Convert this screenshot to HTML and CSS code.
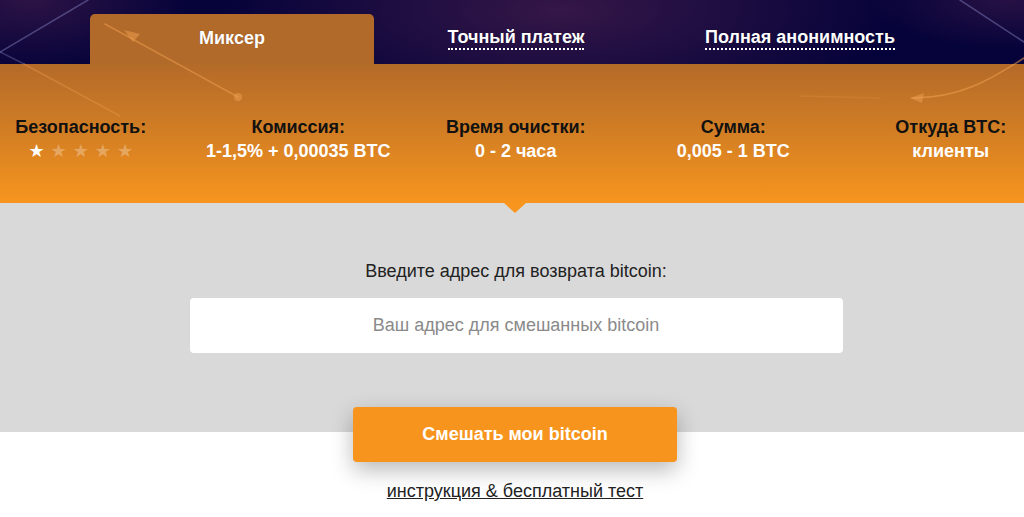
FILE: index.html
```html
<!DOCTYPE html>
<html lang="ru">
<head>
<meta charset="utf-8">
<title>Миксер</title>
<link rel="stylesheet" href="styles.css">
</head>
<body>
<div class="page">
  <header class="hero">
    <svg class="deco" viewBox="0 0 1024 203" preserveAspectRatio="none" aria-hidden="true">
      <g fill="none" stroke-linecap="round">
        <path d="M88 0 L0 52" stroke="#8a8ac8" stroke-opacity="0.45" stroke-width="1.5"/>
        <path d="M0 52 L24 64" stroke="#8a8ac8" stroke-opacity="0.35" stroke-width="1.5"/>
        <path d="M24 64 L120 116" stroke="#f0a050" stroke-opacity="0.35" stroke-width="1.5"/>
        <path d="M105 24 L238 97" stroke="#f0a050" stroke-opacity="0.5" stroke-width="1.5"/>
        <path d="M960 0 L1024 42" stroke="#8a8ac8" stroke-opacity="0.45" stroke-width="1.5"/>
        <path d="M1024 58 C990 80 960 98 912 98" stroke="#f0a050" stroke-opacity="0.55" stroke-width="1.5"/>
        <path d="M800 96 L880 98" stroke="#f0a050" stroke-opacity="0.2" stroke-width="1.5"/>
      </g>
      <g fill="#f0a050" fill-opacity="0.5">
        <path d="M124 30 L140 34 L133 42 Z"/>
        <circle cx="238" cy="97" r="4"/>
        <path d="M910 98 L924 93 L922 103 Z"/>
      </g>
    </svg>
    <nav class="tabs">
      <div class="tab tab-active">Миксер</div>
      <div class="tab"><span class="tab-link">Точный платеж</span></div>
      <div class="tab"><span class="tab-link">Полная анонимность</span></div>
    </nav>
    <section class="panel">
      <div class="stats">
        <div class="stat">
          <div class="stat-label">Безопасность:</div>
          <div class="stars"><span class="star on">★</span><span class="star">★</span><span class="star">★</span><span class="star">★</span><span class="star">★</span></div>
        </div>
        <div class="stat">
          <div class="stat-label">Комиссия:</div>
          <div class="stat-value">1-1,5% + 0,00035 BTC</div>
        </div>
        <div class="stat">
          <div class="stat-label">Время очистки:</div>
          <div class="stat-value">0 - 2 часа</div>
        </div>
        <div class="stat">
          <div class="stat-label">Сумма:</div>
          <div class="stat-value">0,005 - 1 BTC</div>
        </div>
        <div class="stat">
          <div class="stat-label">Откуда BTC:</div>
          <div class="stat-value">клиенты</div>
        </div>
      </div>
    </section>
  </header>
  <section class="form">
    <div class="form-label">Введите адрес для возврата bitcoin:</div>
    <div class="input">Ваш адрес для смешанных bitcoin</div>
  </section>
  <section class="actions">
    <button class="mix-btn">Смешать мои bitcoin</button>
    <a class="help-link" href="#">инструкция &amp; бесплатный тест</a>
  </section>
</div>
</body>
</html>
```
FILE: styles.css
```css
* { box-sizing: border-box; }
html, body { margin: 0; padding: 0; }
body {
  font-family: "Liberation Sans", Arial, sans-serif;
  background: #fff;
  color: #222;
  overflow: hidden;
}
.page { width: 1024px; }

.hero {
  position: relative;
  background:
    radial-gradient(ellipse 340px 110px at 560px 10px, rgba(62, 26, 74, 0.85), rgba(62, 26, 74, 0) 100%),
    radial-gradient(ellipse 160px 70px at 30px 0px, rgba(62, 26, 74, 0.7), rgba(62, 26, 74, 0) 100%),
    radial-gradient(ellipse 140px 50px at 1010px 0px, rgba(62, 26, 74, 0.6), rgba(62, 26, 74, 0) 100%),
    #05033a;
}
.deco {
  position: absolute;
  left: 0; top: 0;
  width: 1024px; height: 203px;
  z-index: 2;
  pointer-events: none;
}

.tabs {
  display: flex;
  justify-content: center;
  padding: 14px 0 0 8px;
}
.tab {
  width: 284px;
  height: 50px;
  display: flex;
  align-items: center;
  justify-content: center;
  color: #fff;
  font-weight: bold;
  font-size: 18px;
  padding-bottom: 2px;
  text-shadow: 0 0 1px rgba(0,0,0,0.3);
}
.tab-active {
  background: #b26a2a;
  border-radius: 5px 5px 0 0;
}
.tab-link {
  border-bottom: 2px dotted #fff;
  line-height: 20px;
  padding-bottom: 1px;
}

.panel {
  position: relative;
  height: 139px;
  background: linear-gradient(to bottom, #b46b29 0%, #cc7a25 40%, #f7951e 100%);
  padding-top: 51px;
}
.panel::after {
  content: "";
  position: absolute;
  left: 504px;
  bottom: -10px;
  border-left: 11px solid transparent;
  border-right: 11px solid transparent;
  border-top: 10px solid #f7951e;
  z-index: 3;
}
.stats {
  display: grid;
  grid-template-columns: repeat(5, 217.5px);
  margin-left: -28px;
  width: 1088px;
  position: relative;
  z-index: 3;
}
.stat {
  text-align: center;
  font-weight: bold;
  font-size: 18px;
  line-height: 24px;
}
.stat-label { color: #111; }
.stat-value { color: #fff; }
.stars {
  display: flex;
  justify-content: center;
  gap: 6px;
  font-size: 18px;
  line-height: 24px;
  font-family: "DejaVu Sans", sans-serif;
  font-weight: normal;
}
.star { color: rgba(255,255,255,0.3); }
.star.on { color: #fff; }

.form {
  background: #d9d9d9;
  height: 229px;
  padding-top: 56px;
  display: flex;
  flex-direction: column;
  align-items: center;
  padding-left: 8px;
}
.form-label {
  font-size: 18px;
  line-height: 24px;
  color: #222;
}
.input {
  margin-top: 15px;
  width: 653px;
  height: 55px;
  background: #fff;
  border-radius: 4px;
  display: flex;
  align-items: center;
  justify-content: center;
  color: #8a8a8a;
  font-size: 18px;
}

.actions {
  display: flex;
  flex-direction: column;
  align-items: center;
  padding-left: 6px;
  margin-top: -25px;
  position: relative;
}
.mix-btn {
  width: 324px;
  height: 55px;
  border: none;
  border-radius: 4px;
  background: #f7941e;
  color: #fff;
  font-family: "Liberation Sans", Arial, sans-serif;
  font-weight: bold;
  font-size: 18px;
  box-shadow: 0 8px 22px rgba(0,0,0,0.28);
  cursor: pointer;
}
.help-link {
  margin-top: 19px;
  font-size: 18px;
  color: #222;
  text-decoration: underline;
}
```
